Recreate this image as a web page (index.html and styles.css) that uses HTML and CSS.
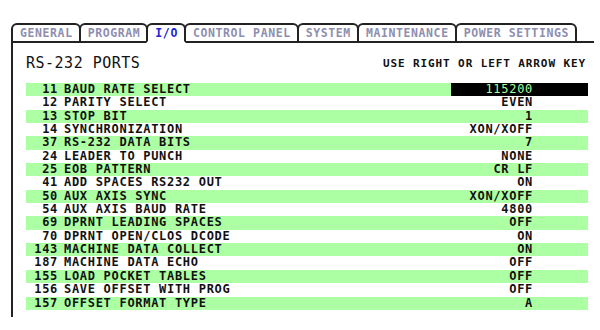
FILE: index.html
```html
<!DOCTYPE html>
<html lang="en">
<head>
  <meta charset="UTF-8" />
  <title>Settings - I/O</title>
  <link rel="stylesheet" href="styles.css">
</head>
<body>
  <div class="screen">
    <div class="tabs">
      <div class="tab">GENERAL</div>
      <div class="tab">PROGRAM</div>
      <div class="tab active">I/O</div>
      <div class="tab">CONTROL PANEL</div>
      <div class="tab">SYSTEM</div>
      <div class="tab">MAINTENANCE</div>
      <div class="tab">POWER SETTINGS</div>
      <div class="tab-fill"></div>
    </div>

    <div class="panel">
      <div class="head">
        <h1>RS-232 PORTS</h1>
        <span class="hint">USE RIGHT OR LEFT ARROW KEY</span>
      </div>

      <div class="rows">
        <div class="row"><span class="num">11</span><span class="label">BAUD RATE SELECT</span><span class="val sel">115200</span></div>
        <div class="row"><span class="num">12</span><span class="label">PARITY SELECT</span><span class="val">EVEN</span></div>
        <div class="row"><span class="num">13</span><span class="label">STOP BIT</span><span class="val">1</span></div>
        <div class="row"><span class="num">14</span><span class="label">SYNCHRONIZATION</span><span class="val">XON/XOFF</span></div>
        <div class="row"><span class="num">37</span><span class="label">RS-232 DATA BITS</span><span class="val">7</span></div>
        <div class="row"><span class="num">24</span><span class="label">LEADER TO PUNCH</span><span class="val">NONE</span></div>
        <div class="row"><span class="num">25</span><span class="label">EOB PATTERN</span><span class="val">CR LF</span></div>
        <div class="row"><span class="num">41</span><span class="label">ADD SPACES RS232 OUT</span><span class="val">ON</span></div>
        <div class="row"><span class="num">50</span><span class="label">AUX AXIS SYNC</span><span class="val">XON/XOFF</span></div>
        <div class="row"><span class="num">54</span><span class="label">AUX AXIS BAUD RATE</span><span class="val">4800</span></div>
        <div class="row"><span class="num">69</span><span class="label">DPRNT LEADING SPACES</span><span class="val">OFF</span></div>
        <div class="row"><span class="num">70</span><span class="label">DPRNT OPEN/CLOS DCODE</span><span class="val">ON</span></div>
        <div class="row"><span class="num">143</span><span class="label">MACHINE DATA COLLECT</span><span class="val">ON</span></div>
        <div class="row"><span class="num">187</span><span class="label">MACHINE DATA ECHO</span><span class="val">OFF</span></div>
        <div class="row"><span class="num">155</span><span class="label">LOAD POCKET TABLES</span><span class="val">OFF</span></div>
        <div class="row"><span class="num">156</span><span class="label">SAVE OFFSET WITH PROG</span><span class="val">OFF</span></div>
        <div class="row"><span class="num">157</span><span class="label">OFFSET FORMAT TYPE</span><span class="val">A</span></div>
      </div>
    </div>
  </div>
</body>
</html>
```

FILE: styles.css
```css
* { box-sizing: border-box; }
body {
  margin: 0;
  background: #fff;
  font-family: 'DejaVu Sans Mono', 'Liberation Mono', monospace;
  color: #111;
}
.screen {
  padding: 23px 0 0 11px;
  width: 594px;
}
.tabs {
  display: flex;
  align-items: flex-end;
}
.tab {
  height: 20px;
  line-height: 17px;
  padding: 0 6px 0 7px;
  border: 2px solid #222;
  border-radius: 6px 6px 0 0;
  margin-right: -2px;
  font-size: 11.5px;
  font-weight: bold;
  letter-spacing: 0.6px;
  color: #8e8eae;
  background: #fff;
  white-space: nowrap;
}
.tab.active {
  color: #2323d8;
  border-bottom-color: #fff;
  position: relative;
  z-index: 1;
}
.tab-fill {
  flex: 1;
  border-bottom: 2px solid #222;
  margin-left: 2px;
}
.panel {
  border-left: 2px solid #222;
  height: 274px;
  padding: 0 4px 0 13px;
}
.head {
  height: 40px;
  display: flex;
  align-items: center;
  justify-content: space-between;
}
h1 {
  margin: 0;
  font-size: 15px;
  font-weight: normal;
  letter-spacing: 0.5px;
}
.hint {
  font-size: 11px;
  font-weight: bold;
  letter-spacing: 0.9px;
  margin-right: 4px;
}
.rows {
  width: 562px;
}
.row {
  display: flex;
  height: 13.35px;
  line-height: 13px;
  font-size: 12px;
  font-weight: bold;
  letter-spacing: 0.7px;
}
.row:nth-child(odd) {
  background: #adffa3;
}
.num {
  width: 32px;
  text-align: right;
  flex: none;
}
.label {
  flex: 1;
  padding-left: 6px;
  white-space: nowrap;
}
.val {
  width: 137px;
  text-align: right;
  padding-right: 55px;
  flex: none;
}
.val.sel {
  background: #000;
  color: #a8ff98;
  font-weight: normal;
}
```
